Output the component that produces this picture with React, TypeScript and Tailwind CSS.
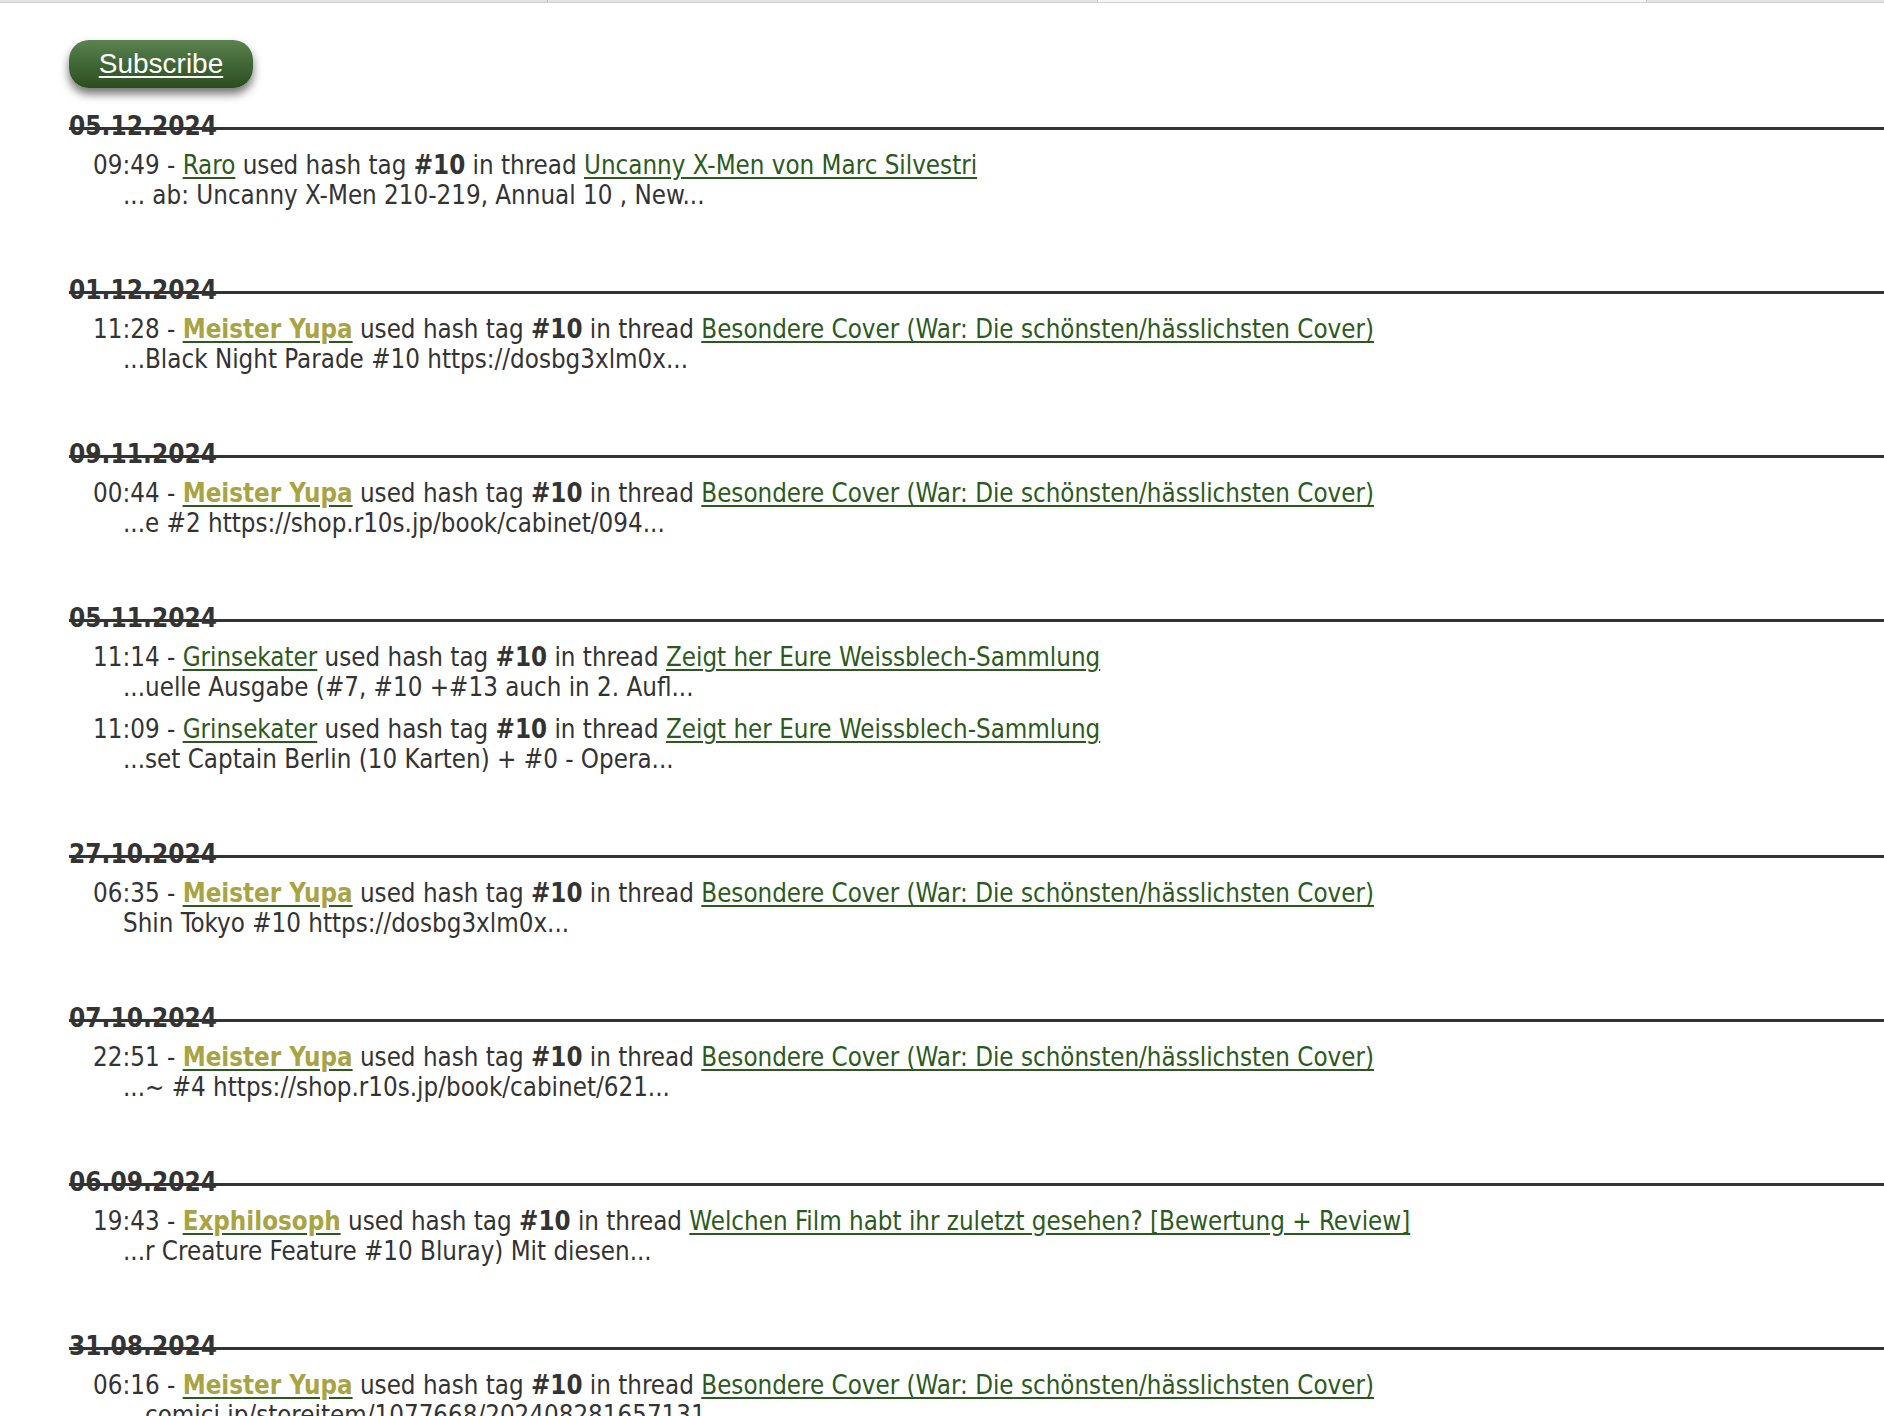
import React from "react";

type Entry = {
  time: string;
  user: string;
  special?: boolean;
  thread: string;
  snippet: string;
};

type Day = { date: string; entries: Entry[] };

const COVER = "Besondere Cover (War: Die schönsten/hässlichsten Cover)";
const WEISS = "Zeigt her Eure Weissblech-Sammlung";

const days: Day[] = [
  {
    date: "05.12.2024",
    entries: [
      {
        time: "09:49",
        user: "Raro",
        thread: "Uncanny X-Men von Marc Silvestri",
        snippet: "... ab: Uncanny X-Men 210-219, Annual 10 , New...",
      },
    ],
  },
  {
    date: "01.12.2024",
    entries: [
      {
        time: "11:28",
        user: "Meister Yupa",
        special: true,
        thread: COVER,
        snippet: "...Black Night Parade #10 https://dosbg3xlm0x...",
      },
    ],
  },
  {
    date: "09.11.2024",
    entries: [
      {
        time: "00:44",
        user: "Meister Yupa",
        special: true,
        thread: COVER,
        snippet: "...e #2 https://shop.r10s.jp/book/cabinet/094...",
      },
    ],
  },
  {
    date: "05.11.2024",
    entries: [
      {
        time: "11:14",
        user: "Grinsekater",
        thread: WEISS,
        snippet: "...uelle Ausgabe (#7, #10 +#13 auch in 2. Aufl...",
      },
      {
        time: "11:09",
        user: "Grinsekater",
        thread: WEISS,
        snippet: "...set Captain Berlin (10 Karten) + #0 - Opera...",
      },
    ],
  },
  {
    date: "27.10.2024",
    entries: [
      {
        time: "06:35",
        user: "Meister Yupa",
        special: true,
        thread: COVER,
        snippet: "Shin Tokyo #10 https://dosbg3xlm0x...",
      },
    ],
  },
  {
    date: "07.10.2024",
    entries: [
      {
        time: "22:51",
        user: "Meister Yupa",
        special: true,
        thread: COVER,
        snippet: "...~ #4 https://shop.r10s.jp/book/cabinet/621...",
      },
    ],
  },
  {
    date: "06.09.2024",
    entries: [
      {
        time: "19:43",
        user: "Exphilosoph",
        special: true,
        thread: "Welchen Film habt ihr zuletzt gesehen? [Bewertung + Review]",
        snippet: "...r Creature Feature #10 Bluray) Mit diesen...",
      },
    ],
  },
  {
    date: "31.08.2024",
    entries: [
      {
        time: "06:16",
        user: "Meister Yupa",
        special: true,
        thread: COVER,
        snippet: "...comici.jp/storeitem/1077668/202408281657131...",
      },
    ],
  },
];

const EntryRow = ({ e }: { e: Entry }) => (
  <div className="ml-[24px]">
    <div>
      {e.time} -{" "}
      <a href="#" className="text-[#2c5a1c] underline underline-offset-[3px]">
        {e.special ? (
          <span className="font-bold text-[#a9a443]">{e.user}</span>
        ) : (
          e.user
        )}
      </a>{" "}
      used hash tag <b>#10</b> in thread{" "}
      <a href="#" className="text-[#2c5a1c] underline underline-offset-[3px]">
        {e.thread}
      </a>
    </div>
    <div className="pl-[30px]">{e.snippet}</div>
  </div>
);

export default function App() {
  return (
    <div
      className="min-h-screen bg-white text-[#333] text-[25.7px] leading-[30px]"
      style={{ fontFamily: '"DejaVu Sans Condensed", "DejaVu Sans", sans-serif' }}
    >
      <div className="flex h-[3px] border-b border-[#cfcfcf]">
        <div className="w-[548px] bg-[#e3e3e3] border-r border-[#c4c4c4]" />
        <div className="w-[550px] bg-[#e3e3e3] border-r border-[#c4c4c4]" />
        <div className="w-[549px] bg-[#f7f7f7] border-r border-[#c4c4c4]" />
        <div className="flex-1 bg-[#e3e3e3]" />
      </div>

      <div className="pl-[69px]">
        <div className="pt-[37px]">
          <a
            href="#"
            className="inline-flex h-[48px] w-[184px] items-center justify-center rounded-[20px] bg-gradient-to-b from-[#5b8250] to-[#2a4d1d] text-[28px] text-white underline underline-offset-[3px] shadow-[0_6px_10px_rgba(0,0,0,0.55)]"
            style={{ fontFamily: '"Liberation Sans", Arial, sans-serif' }}
          >
            Subscribe
          </a>
        </div>

        <div className="mt-[23px]">
          {days.map((d) => (
            <div key={d.date} className="mb-[65px]">
              <div className="h-[19px] border-b-[3px] border-[#333] text-[26px] font-bold whitespace-nowrap">
                {d.date}
              </div>
              <div className="mt-[20px] flex flex-col gap-[12px]">
                {d.entries.map((e) => (
                  <EntryRow key={e.time} e={e} />
                ))}
              </div>
            </div>
          ))}
        </div>
      </div>
    </div>
  );
}
